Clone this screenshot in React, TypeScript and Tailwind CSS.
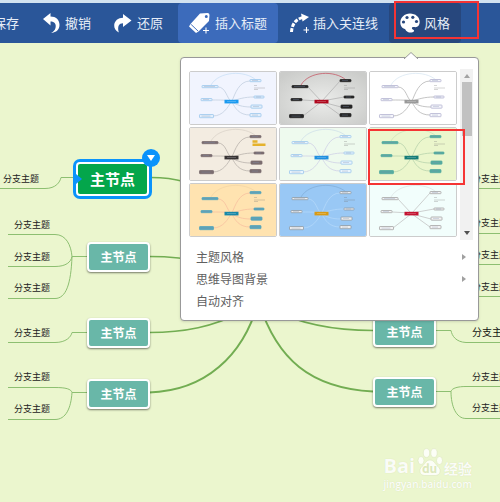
import type { ReactNode } from "react";

type Theme = {
  name: string;
  bg: string;
  node: string;
  stroke: string;
  center: string;
  line: string;
  arc: string;
  sub?: string;
  straight?: boolean;
};

const themes: Theme[] = [
  { name: "Sky", bg: "#f1f4fe", node: "#e2effc", stroke: "#9cc6ec", center: "#1b9af0", line: "#c3cfe0", arc: "#c9dff6" },
  { name: "Graphite", bg: "url(#graphite)", node: "#262626", stroke: "#262626", center: "#b0081e", line: "#b4b4b4", arc: "#c65a68", straight: true },
  { name: "Plain", bg: "#ffffff", node: "#f6f6fc", stroke: "#b4b4d0", center: "#9a9a9a", line: "#b5b5b5", arc: "#d9e7f2" },
  { name: "Mocha", bg: "#f3ece1", node: "#7b6d70", stroke: "#7b6d70", center: "#383435", line: "#b9b3ac", arc: "#dbd3c9", sub: "#e5b22c" },
  { name: "Mint", bg: "#eefaee", node: "#eaf5fe", stroke: "#9cc6ec", center: "#2090e0", line: "#cfd1e6", arc: "#cfe0ea" },
  { name: "Meadow", bg: "#ebf6cc", node: "#55aba0", stroke: "#55aba0", center: "#157c78", line: "#b8d3ac", arc: "#cfe1bd" },
  { name: "Sunrise", bg: "#ffe3b0", node: "#58a5ba", stroke: "#58a5ba", center: "#1888a8", line: "#f8c0a0", arc: "#f3d5a6" },
  { name: "Ocean", bg: "#99c8f5", node: "#eeeeee", stroke: "#8d99a5", center: "#d99a14", line: "#b4d8fa", arc: "#83aed8" },
  { name: "Ice", bg: "#f2fefc", node: "#f4f4f4", stroke: "#a5a5a5", center: "#c41230", line: "#c4c4c4", arc: "#dde5e4", straight: true },
];

const thumbNodes = [
  [13, 14.5, 16, 2.2],
  [12, 27.5, 11, 2.2],
  [10.5, 43.5, 14, 3.2],
  [61, 8.5, 11, 2.2],
  [65, 25, 10, 2],
  [62, 34, 11, 3.2],
  [61, 42.5, 11, 3.2],
];

const curves = [
  "M29 16C37 16 38 28 42 30",
  "M23 29C32 29 37 29 42 30",
  "M24 45C34 45 39 36 42 31",
  "M61 10C50 10 46 23 43 30",
  "M65 26C55 26 50 28 43 30",
  "M62 36C53 36 48 34 43 31",
  "M61 44C50 44 46 37 43 31",
];

const rays = ["M29 16L42 30", "M23 29L42 30", "M24 45L42 31", "M61 10L43 30", "M65 26L43 30", "M62 36L43 31", "M61 44L43 31"];

const ThemePreview = ({ theme }: { theme: Theme }) => (
  <svg viewBox="1 1 86 52" className="block h-full w-full" aria-hidden="true">
    {theme.name === "Graphite" && (
      <radialGradient id="graphite" cx="0.5" cy="0.55" r="0.65">
        <stop offset="0" stopColor="#ebecea" />
        <stop offset="1" stopColor="#cbccca" />
      </radialGradient>
    )}
    <rect width="88" height="54" fill={theme.bg} />
    <g fill="none" strokeWidth="0.8">
      <path d="M22 14C30 0 56 -1 67 9" stroke={theme.arc} />
      {(theme.straight ? rays : curves).map((d) => (
        <path key={d} d={d} stroke={theme.line} />
      ))}
    </g>
    {thumbNodes.map(([x, y, w, h]) => (
      <g key={`${x}-${y}`}>
        <rect x={x} y={y} width={w} height={h} rx="0.6" fill={theme.node} stroke={theme.stroke} strokeWidth="0.8" />
        <path d={`M${x + 2} ${y + h / 2}h${w - 5}`} stroke="#8090b0" strokeWidth="0.7" opacity="0.5" />
      </g>
    ))}
    {theme.sub ? (
      <path d="M63.5 14.5h5M63.5 17.7h13" stroke={theme.sub} strokeWidth="2.4" />
    ) : (
      <path d="M65 14.5h3M65 17h11M65 18.5h4" stroke="#777777" strokeWidth="0.6" opacity="0.5" />
    )}
    <rect x="35.5" y="28.8" width="14" height="3.6" fill={theme.center} />
    <path d="M38 30.6h9" stroke="#ffffff" strokeWidth="0.6" opacity="0.4" />
  </svg>
);

const UndoIcon = () => (
  <svg width="20" height="20" viewBox="0 0 20 20" fill="#fff" aria-hidden="true">
    <path d="M9.5 0L2 6L9.5 12.5V8.5C13.5 8.500 15.500 11 14.500 15C13.800 17.500 12 19 10 20C15.500 19.500 18.500 16.500 18.500 11.800C18.500 7 15 3.500 9.500 3.500Z" />
  </svg>
);

const RedoIcon = () => (
  <svg width="20" height="20" viewBox="0 0 20 20" fill="#fff" aria-hidden="true">
    <path d="M10 1L18.500 7.500L10 14V10.200C6 10.200 4.200 13 5.800 19.500C2.500 17.500 1 15 1.200 12C1.600 8 5 4.800 10 4.800Z" />
  </svg>
);

const TagIcon = () => (
  <svg width="22" height="22" viewBox="0 0 22 22" fill="#fff" aria-hidden="true">
    <path
      fillRule="evenodd"
      d="M11 1.5L18.5 1Q20.5 1 20.5 3L20 9L9.5 19.5L1.5 12ZM17.3 3A1.5 1.5 0 1 0 17.3 6A1.5 1.5 0 1 0 17.3 3Z"
    />
    <path d="M1.5 12L0 14.5L7 21L9.5 19.5" />
    <path d="M2.2 12.5L9 19" stroke="#3c6bbb" strokeWidth="0.9" />
    <path d="M17 15.5v6M14 18.5h6" stroke="#fff" strokeWidth="1.1" />
  </svg>
);

const RelationIcon = () => (
  <svg width="20" height="20" viewBox="0 0 20 20" fill="none" stroke="#fff" aria-hidden="true">
    <path d="M2.5 19C3 11 7 6 14 4.5" strokeWidth="3" strokeDasharray="3.8 1.4" />
    <path d="M12 .5L20 4L13.5 8.5Z" fill="#fff" stroke="none" />
    <path d="M17.5 14v6M14.5 17h6" strokeWidth="1.1" />
  </svg>
);

const PaletteIcon = () => (
  <svg width="20" height="20" viewBox="0 0 20 20" aria-hidden="true">
    <path
      fill="#fff"
      d="M10 .5C4.500 .5 .3 4.500 .3 9.500C.3 13 2.500 15.500 5 16C6.500 19 9.500 20 11.500 19.500C14.500 18.800 14.800 17.500 13 16.500C11 15.300 12 13.500 14 14C17.500 14.800 19.700 12.500 19.700 9C19.700 4 15.500 .5 10 .5Z"
    />
    <g fill="#27477d">
      <circle cx="3.5" cy="9" r="1.6" />
      <circle cx="7" cy="4.5" r="1.6" />
      <circle cx="12.8" cy="4.3" r="1.6" />
      <circle cx="16.5" cy="8.5" r="1.6" />
    </g>
  </svg>
);

const SaveIcon = () => (
  <svg width="20" height="20" viewBox="0 0 20 20" fill="#fff" aria-hidden="true">
    <path d="M2 2h13l3 3v13H2z" />
  </svg>
);

const ToolButton = ({ icon, label, className = "" }: { icon: ReactNode; label: string; className?: string }) => (
  <button
    type="button"
    className={`flex h-10 shrink-0 items-center gap-1 px-[11px] text-[13px] whitespace-nowrap text-[#e6edf7] ${className}`}
  >
    {icon}
    <span>{label}</span>
  </button>
);

const StyleMenu = () => (
  <div className="absolute top-full -right-[18px] z-20 mt-[14px] w-[299px] rounded border border-[#999] bg-white pb-2 shadow-sm">
    <svg className="absolute -top-[6px] left-[223px]" width="14" height="7" viewBox="0 0 14 7" aria-hidden="true">
      <path d="M0 7L7 .5L14 7" fill="#fff" stroke="#999" />
    </svg>
    <div className="flex justify-between pt-[11px] pr-[5px] pl-2">
      <div className="relative grid grid-cols-3 gap-0.5 pt-0.5 pb-[3px]">
        {themes.map((theme) => (
          <button
            key={theme.name}
            type="button"
            aria-label={theme.name}
            className="h-[54px] w-[88px] overflow-hidden rounded-xs border border-[#cccccc]"
          >
            <ThemePreview theme={theme} />
          </button>
        ))}
        <div className="pointer-events-none absolute top-[60px] -right-2 h-14 w-[97px] border-2 border-[#f53434]" />
      </div>
      <div className="flex w-[13px] flex-col items-center justify-between bg-[#f1f1f1] py-[5px]">
        <div className="flex flex-col items-center gap-1">
          <svg width="6" height="4" viewBox="0 0 6 4" aria-hidden="true">
            <path d="M0 4L3 0L6 4Z" fill="#a3a3a3" />
          </svg>
          <div className="h-[54px] w-[10px] bg-[#c1c1c1]" />
        </div>
        <svg width="6" height="4" viewBox="0 0 6 4" aria-hidden="true">
          <path d="M0 0L3 4L6 0Z" fill="#505050" />
        </svg>
      </div>
    </div>
    <ul className="mt-1.5 text-xs text-[#606060]">
      {["主题风格", "思维导图背景", "自动对齐"].map((label, i) => (
        <li key={label}>
          <button type="button" className="flex h-[22px] w-full items-center justify-between pr-3 pl-[15px]">
            {label}
            {i < 2 && (
              <svg width="4" height="6" viewBox="0 0 4 6" aria-hidden="true">
                <path d="M0 0L4 3L0 6Z" fill="#a0a0a0" />
              </svg>
            )}
          </button>
        </li>
      ))}
    </ul>
  </div>
);

const Toolbar = () => (
  <header className="relative z-10 border-t-[3px] border-[#d2e2f0] bg-[#2a5699]">
    <nav className="-ml-[42px] flex h-10">
      <ToolButton icon={<SaveIcon />} label="保存" />
      <ToolButton icon={<UndoIcon />} label="撤销" />
      <ToolButton icon={<RedoIcon />} label="还原" />
      <ToolButton icon={<TagIcon />} label="插入标题" className="ml-1 rounded-sm bg-[#3c6bbb]" />
      <ToolButton icon={<RelationIcon />} label="插入关连线" />
      <div className="relative">
        <ToolButton icon={<PaletteIcon />} label="风格" className="rounded-sm bg-[#27477d]" />
        <div className="pointer-events-none absolute -top-0.5 left-[5px] h-[38px] w-[85px] border-2 border-[#f53434]" />
        <StyleMenu />
      </div>
    </nav>
  </header>
);

// Positions are relative to the top left corner of the canvas
const topics = [
  { x: 87, y: 199 },
  { x: 87, y: 275 },
  { x: 87, y: 336 },
  { x: 373, y: 274 },
  { x: 373, y: 334 },
];

const leaves = [
  { x: 3, y: 130 },
  { x: 14, y: 176 },
  { x: 14, y: 208 },
  { x: 14, y: 239 },
  { x: 14, y: 284 },
  { x: 14, y: 328 },
  { x: 14, y: 360 },
  { x: 472, y: 130 },
  { x: 472, y: 174 },
  { x: 472, y: 206 },
  { x: 472, y: 238 },
  { x: 472, y: 328 },
  { x: 472, y: 359 },
];

const leafLines = [
  "M0 145.5H45C56 145.5 60 139 61 134.5H73",
  "M8 191.5H55C66 191.5 71 202 72 213.5H87",
  "M8 223.5H55C66 223.5 71 219 72 213.5",
  "M8 255.5H55C66 255.5 71 241 72 213.5",
  "M8 299.5H55C66 299.5 71 294 72 289.5H87",
  "M8 344.5H55C66 344.5 71 346 72 349.5H87",
  "M8 376.5H55C66 376.5 71 365 72 349.5",
  "M460 145.5H500",
  "M460 190.5H500",
  "M460 221.5H500",
  "M460 253.5H500",
  "M436 287.5H451C452 293 456 299 466 299.5H500",
  "M436 348.5H451C452 345 458 343.5 466 343.5H500",
  "M451 348.5C451 363 456 375.5 466 375.5H500",
];

const branches = [
  { d: "M151 134.5C200 134.5 230 155 258 210", width: 1.5 },
  { d: "M149 213.5C190 213.5 220 220 258 240", width: 1.5 },
  { d: "M149 289.5C185 289.5 212 284 245 268", width: 1.5 },
  { d: "M149 349.5C205 348 243 313 258 260", width: 2 },
  { d: "M373 287.5C335 287.5 300 281 270 266", width: 1.5 },
  { d: "M373 348.5C310 345 277 316 259 260", width: 2 },
];

const Watermark = () => (
  <div className="absolute right-7 bottom-2.5 text-white/90 [text-shadow:0_0_1px_#cfdcae]">
    <div className="flex items-end justify-between">
      <span className="font-['Open_Sans',sans-serif] text-[20px] leading-5 font-bold">Bai</span>
      <span className="relative flex h-7 w-[26px] items-end justify-center">
        <svg
          className="absolute inset-0"
          width="26"
          height="28"
          viewBox="0 0 26 28"
          fill="#fcfef6"
          stroke="#dbe6bd"
          strokeWidth="0.6"
          aria-hidden="true"
        >
          <ellipse cx="4" cy="12.5" rx="3" ry="4" />
          <ellipse cx="9.5" cy="5" rx="3.2" ry="4.4" />
          <ellipse cx="17" cy="5" rx="3.2" ry="4.4" />
          <ellipse cx="22.500" cy="12.5" rx="3" ry="4" />
          <path d="M13 12C17 12 18 16 21 18.5C25 22 23 27.5 18.5 27.5H7.5C3 27.5 1 22 5 18.5C8 16 9 12 13 12Z" />
        </svg>
        <span className="relative text-[12px] leading-4 font-bold text-[#dce8bb] [text-shadow:none]">du</span>
      </span>
      <span className="text-[14px] leading-4 font-bold">经验</span>
    </div>
    <div className="font-['Open_Sans',sans-serif] text-[10px] leading-4 font-semibold">jingyan.baidu.com</div>
  </div>
);

const MindMap = () => (
  <main className="relative flex-1 overflow-hidden">
    <svg className="absolute top-0 left-0" width="500" height="459" viewBox="0 0 500 459" fill="none" aria-hidden="true">
      {leafLines.map((d) => (
        <path key={d} d={d} stroke="#8dbf71" />
      ))}
      {branches.map(({ d, width }) => (
        <path key={d} d={d} stroke="#72ad52" strokeWidth={width} />
      ))}
    </svg>

    {leaves.map(({ x, y }) => (
      <span
        key={`${x}-${y}`}
        className="absolute text-[9px] leading-3 whitespace-nowrap text-[#222]"
        style={{ left: x, top: y }}
      >
        分支主题
      </span>
    ))}
    <span className="absolute top-[282px] left-[472px] text-[10px] leading-[14px] whitespace-nowrap text-[#111]">分支主题</span>

    {topics.map(({ x, y }) => (
      <div
        key={`${x}-${y}`}
        className="absolute flex h-[30px] w-[63px] items-center justify-center rounded-sm border-2 border-white bg-[#69b7a8] text-xs font-bold text-white shadow-[0_1px_2px_rgba(0,0,0,0.5)]"
        style={{ left: x, top: y }}
      >
        主节点
      </div>
    ))}

    <div className="absolute top-[119px] left-[76px] flex h-[34px] w-[73px] items-center justify-center rounded-sm border-2 border-white bg-[#04a64b] text-[15px] font-bold text-white ring-3 ring-[#0a93fb]">
      主节点
      <svg className="absolute top-[10px] -left-[2px]" width="6" height="10" viewBox="0 0 6 10" aria-hidden="true">
        <path d="M0 0L6 5L0 10Z" fill="#0a93fb" />
      </svg>
      <button
        type="button"
        aria-label="展开"
        className="absolute -top-[15px] -right-[13px] flex size-[18px] items-center justify-center rounded-full bg-[#0a93fb]"
      >
        <svg width="8" height="6" viewBox="0 0 8 6" aria-hidden="true">
          <path d="M0 0H8L4 6Z" fill="#fff" />
        </svg>
      </button>
    </div>

    <Watermark />
  </main>
);

export default function App() {
  return (
    <div className="flex min-h-screen flex-col overflow-x-clip bg-[#ebf6ce] font-['Noto_Sans_CJK_SC',sans-serif]">
      <Toolbar />
      <MindMap />
    </div>
  );
}
